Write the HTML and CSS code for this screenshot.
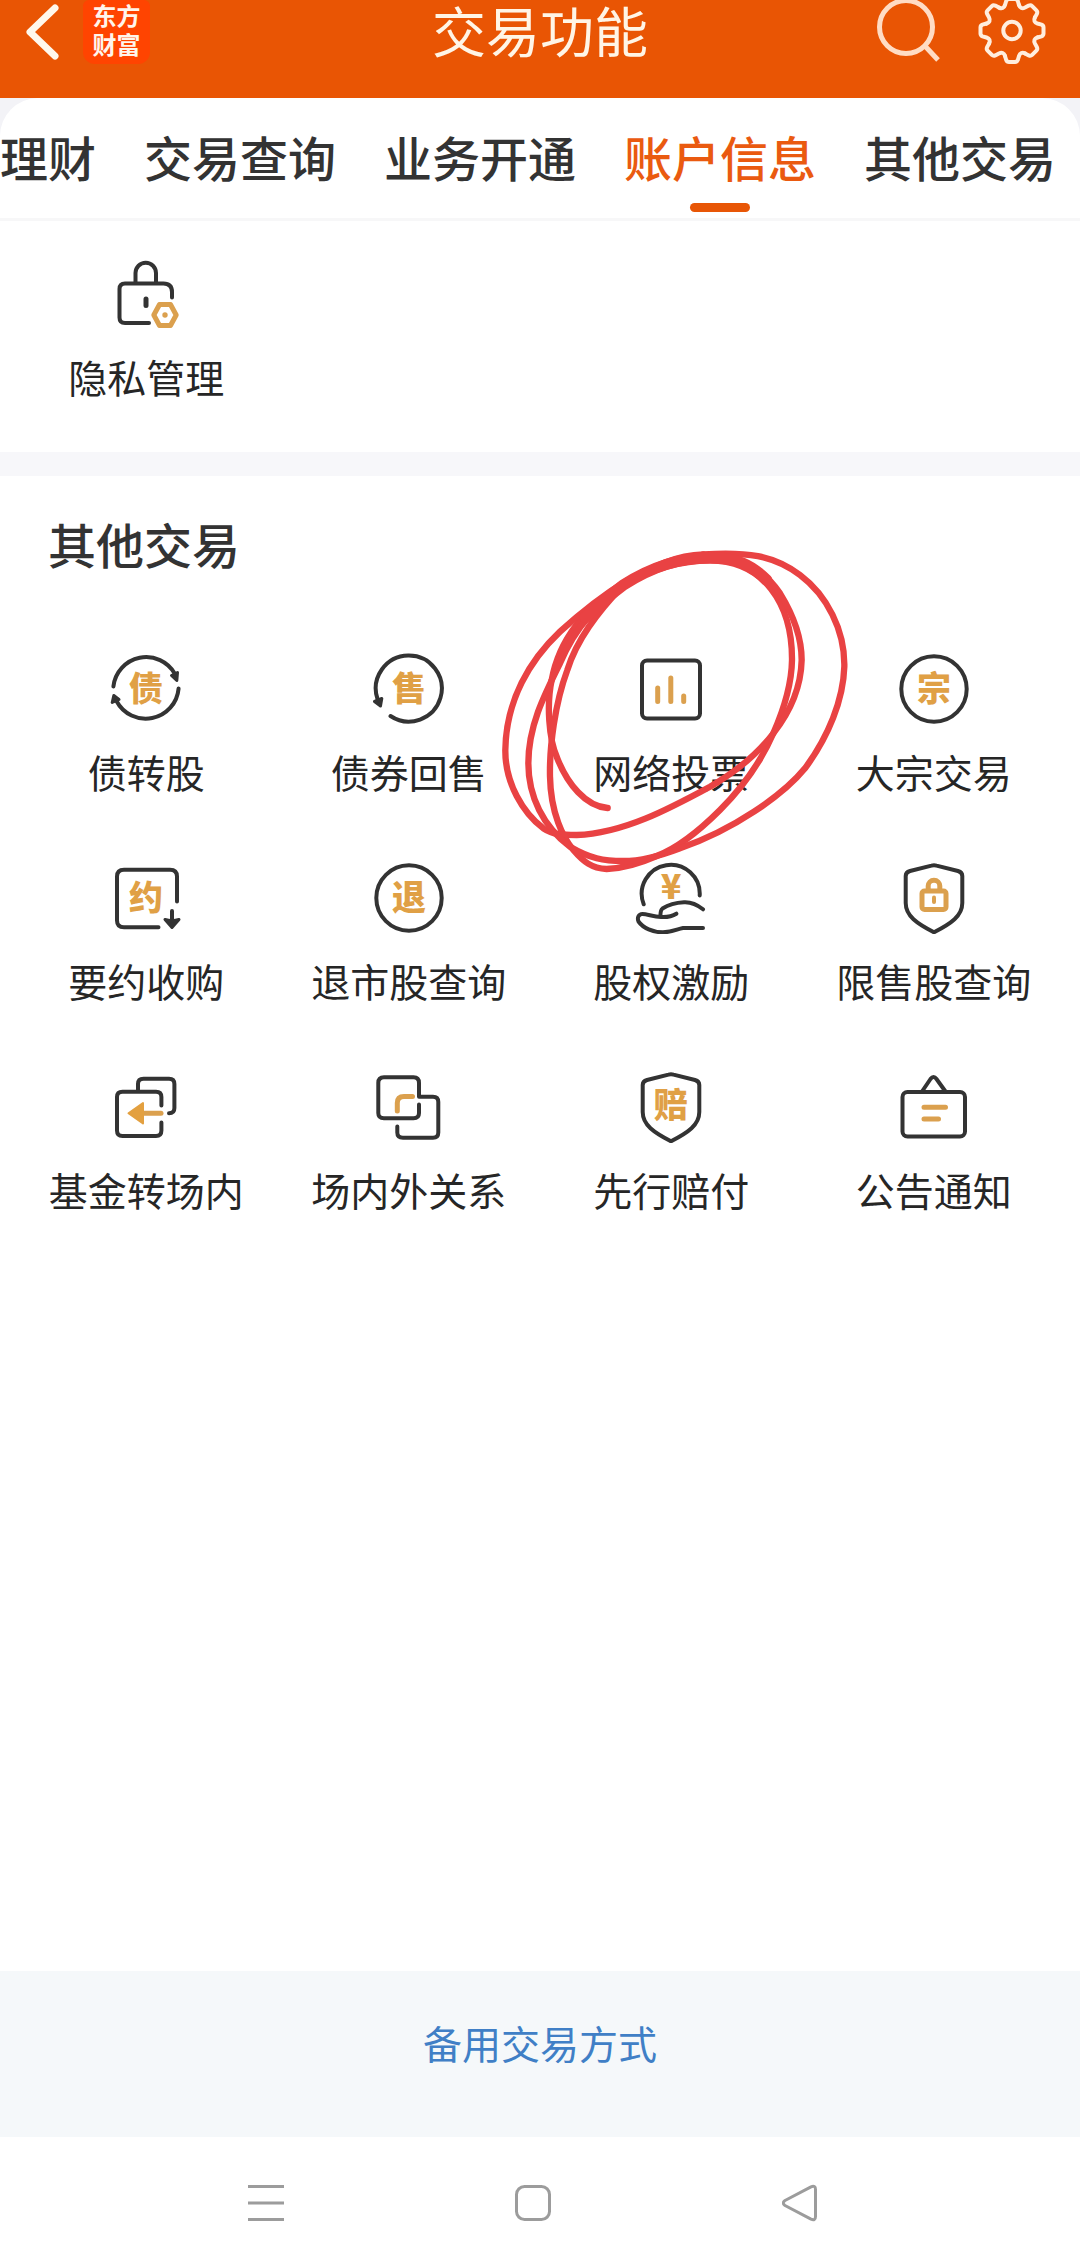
FILE: index.html
```html
<!DOCTYPE html>
<html lang="zh-CN">
<head>
<meta charset="utf-8">
<meta name="viewport" content="width=device-width, initial-scale=1">
<title>交易功能</title>
<link rel="stylesheet" href="styles.css">
</head>
<body>
<header class="topbar">
  <div class="topbar-left">
    <button class="icon-button" type="button" aria-label="返回">
      <svg class="back-icon" viewBox="0 0 34 62"><path d="M29 7L4 31L29 55"/></svg>
    </button>
    <div class="brand"><span>东方</span><span>财富</span></div>
  </div>
  <h1 class="title">交易功能</h1>
  <div class="topbar-right">
    <button class="icon-button" type="button" aria-label="搜索">
      <svg class="search-icon" viewBox="0 0 64 64"><circle cx="29" cy="27" r="26.500"/><path d="M48 46L61 60"/></svg>
    </button>
    <button class="icon-button" type="button" aria-label="设置">
      <svg class="gear-icon" viewBox="0 0 68 64">
        <defs><path id="tooth" d="M-13.1-22.9Q-8.6-20.8-7-25.5L-5.8-29.5Q-5-31.5-3-31.5H3Q5-31.5 5.8-29.5L7-25.5"/></defs>
        <g transform="translate(34 30.5)">
          <use href="#tooth"/><use href="#tooth" transform="rotate(45)"/><use href="#tooth" transform="rotate(90)"/><use href="#tooth" transform="rotate(135)"/>
          <use href="#tooth" transform="rotate(180)"/><use href="#tooth" transform="rotate(225)"/><use href="#tooth" transform="rotate(270)"/><use href="#tooth" transform="rotate(315)"/>
          <circle r="8.7"/>
        </g>
      </svg>
    </button>
  </div>
</header>

<div class="tabs-wrap">
  <nav class="tabs">
    <a class="tab" href="#licai">理财</a>
    <a class="tab" href="#query">交易查询</a>
    <a class="tab" href="#open">业务开通</a>
    <a class="tab tab-active" href="#account" aria-current="page">账户信息</a>
    <a class="tab" href="#other">其他交易</a>
  </nav>
</div>

<main class="content">
  <section class="section account" id="account">
    <div class="grid">
      <a class="item" href="#privacy">
        <svg class="icon" viewBox="0 0 72 72">
          <path d="M25.500 25V15a10.250 10.250 0 0 1 20.500 0V25M62 39.500V34q0-8.500-8.500-8.500H15q-5.500 0-5.500 5.500V59.500q0 5.500 5.500 5.500H39"/>
          <path class="thick" d="M36 41V47.500"/>
          <path class="gold" d="M49.500 46.500H60.500L66.200 57L60.500 67.500H49.500L43.800 57Z"/><circle class="gold-fill" cx="55" cy="57" r="2.700"/>
        </svg>
        <span class="label">隐私管理</span>
      </a>
    </div>
  </section>

  <section class="section other" id="other">
    <h2 class="heading">其他交易</h2>
    <div class="grid">
      <a class="item" href="#i1">
        <svg class="icon" viewBox="0 0 72 72">
          <path d="M3.400 33.500A33 33 0 0 1 65 21M68.600 35.500A33 33 0 0 1 6.500 48"/>
          <path class="head" d="M61.500 22.500L67.500 19.500L66.800 27.500ZM2.200 49.500L3.800 42.500L9 46.500Z"/>
          <text x="36" y="48">债</text>
        </svg>
        <span class="label">债转股</span>
      </a>
      <a class="item" href="#i2">
        <svg class="icon" viewBox="0 0 72 72">
          <path d="M17.500 63A33 33 0 1 0 4.500 46"/>
          <path class="head" d="M1.500 48.500L8.800 45.500L7.500 53Z"/>
          <text x="36" y="48">售</text>
        </svg>
        <span class="label">债券回售</span>
      </a>
      <a class="item marked" href="#i3">
        <svg class="icon" viewBox="0 0 72 72">
          <rect x="7" y="7.500" width="58" height="58" rx="5"/>
          <path class="gold" d="M22.700 35V48.500M35.800 25V48.500M48.700 43V48.500"/>
        </svg>
        <span class="label">网络投票</span>
        <svg class="scribble" viewBox="0 0 1200 1080" aria-hidden="true">
          <path d="M383 834C318 830 262 762 232 685C205 625 200 520 215 450C235 340 300 240 440 155C520 108 590 75 670 73"/>
          <path d="M430 165C520 115 600 92 690 92C850 92 937 220 936 390C935 460 915 530 880 610C845 690 790 770 720 840C660 900 590 955 530 978C480 1000 430 1015 380 1017C335 1015 310 995 280 960C250 925 212 850 210 740C208 650 225 520 262 420C290 330 350 250 430 165"/>
          <path d="M430 165C520 100 600 82 680 82C800 80 860 130 900 190C940 255 965 320 965 390C963 470 935 540 880 610C830 675 760 730 690 770C570 835 430 910 290 915C250 915 220 915 190 895C130 850 75 760 76 660C78 510 150 390 240 305C300 250 370 195 440 152"/>
          <path d="M670 73C800 65 880 75 960 135C1040 195 1095 300 1093 410C1090 510 1045 620 975 715C910 795 760 900 600 955C540 978 480 993 430 993C370 993 330 985 270 950C190 890 145 800 145 700C145 590 190 500 240 400C290 280 360 220 430 165"/>
          <path class="overlap" d="M315 262C355 225 390 195 430 165C520 108 600 83 690 83C770 83 815 105 860 150"/>
        </svg>
      </a>
      <a class="item" href="#i4">
        <svg class="icon" viewBox="0 0 72 72"><circle cx="36" cy="36" r="32.700"/><text x="36" y="48">宗</text></svg>
        <span class="label">大宗交易</span>
      </a>
      <a class="item" href="#i5">
        <svg class="icon" viewBox="0 0 72 72">
          <path d="M67 39.500V14.500Q67 7.700 60 7.700H14Q7 7.700 7 14.500V58.500Q7 65.300 14 65.300H48.500M62 49V60"/>
          <path class="head" d="M55 57.500Q62 60 69 57.500L62 65.500Z"/>
          <text x="36" y="48">约</text>
        </svg>
        <span class="label">要约收购</span>
      </a>
      <a class="item" href="#i6">
        <svg class="icon" viewBox="0 0 72 72"><circle cx="36" cy="36" r="32.700"/><text x="36" y="48">退</text></svg>
        <span class="label">退市股查询</span>
      </a>
      <a class="item" href="#i7">
        <svg class="icon" viewBox="0 0 72 72">
          <path d="M8.700 42.300A29 29 0 1 1 64.700 33.500M68 47.300C60 41 54 40 49 40.300C41 40.700 33 43 27.500 46.500C25.500 48 25.500 50 25.400 53.500M41.400 51.700C37 54.500 32 55.300 26 55C18 54.500 12 52 7.500 52C3.500 52 2 56 3.500 59.500C8 66 18 70.400 28 70.300C38 70.200 42 67 48 66H68"/>
          <text x="36" y="37">¥</text>
        </svg>
        <span class="label">股权激励</span>
      </a>
      <a class="item" href="#i8">
        <svg class="icon" viewBox="0 0 72 72">
          <path d="M33.500 3.600Q36 2.900 38.500 3.600L60 9Q64.300 10.200 64.300 14V41C64.300 54 53 61.500 36 70.300C19 61.500 7.700 54 7.700 41V14Q7.700 10.200 12 9Z"/>
          <path class="gold" d="M30.200 28V24a5.800 5.800 0 0 1 11.600 0V28"/><rect class="gold" x="24" y="29" width="24" height="18.500" rx="2.500"/>
          <path class="gold-thin" d="M36 35.500V40"/>
        </svg>
        <span class="label">限售股查询</span>
      </a>
      <a class="item" href="#i9">
        <svg class="icon" viewBox="0 0 72 72">
          <path d="M51.400 34.500V26Q51.400 20.700 46 20.700H12.500Q7 20.700 7 26V59.500Q7 65 12.500 65H46Q51.400 65 51.400 59.500V51.500M28 20.700V13Q28 7.700 33.500 7.700H59Q64.400 7.700 64.400 13V37Q64.400 42.300 59 42.300"/>
          <path class="gold" d="M32 42.300H51"/><path class="gold-head" d="M18.500 42.300L33 32V52.500Z"/>
        </svg>
        <span class="label">基金转场内</span>
      </a>
      <a class="item" href="#i10">
        <svg class="icon" viewBox="0 0 72 72">
          <path d="M46 33.500V42Q46 47.300 40.500 47.300H11Q5.300 47.300 5.300 42V12Q5.300 6.300 11 6.300H40.500Q46 6.300 46 12V25.700H60Q65.300 25.700 65.300 31V61.500Q65.300 66.700 60 66.700H30Q24.300 66.700 24.300 61.500V55.500"/>
          <path class="gold" d="M39.500 25.500H31Q24.300 25.500 24.300 32V40"/>
        </svg>
        <span class="label">场内外关系</span>
      </a>
      <a class="item" href="#i11">
        <svg class="icon" viewBox="0 0 72 72">
          <path d="M33.500 3.600Q36 2.900 38.500 3.600L60 9Q64.300 10.200 64.300 14V41C64.300 54 53 61.500 36 70.300C19 61.500 7.700 54 7.700 41V14Q7.700 10.200 12 9Z"/>
          <text x="36" y="46">赔</text>
        </svg>
        <span class="label">先行赔付</span>
      </a>
      <a class="item" href="#i12">
        <svg class="icon" viewBox="0 0 72 72">
          <rect x="4.500" y="21" width="62.500" height="44.500" rx="5"/><path d="M24 20.500L32.500 8Q35.500 4 38.500 8L47.500 20.500"/>
          <path class="gold" d="M26 36.300H47.500M26 48H40.500"/>
        </svg>
        <span class="label">公告通知</span>
      </a>
    </div>
  </section>
</main>

<footer class="footer"><a class="backup" href="#backup">备用交易方式</a></footer>

<div class="sysnav">
  <button class="icon-button" type="button" aria-label="最近任务"><svg class="sys-icon" viewBox="0 0 36 38"><path d="M0 2.500H36M0 19H36M0 35.500H36"/></svg></button>
  <button class="icon-button" type="button" aria-label="主页"><svg class="sys-icon" viewBox="0 0 36 38"><rect x="1.500" y="2.500" width="33" height="33" rx="8"/></svg></button>
  <button class="icon-button" type="button" aria-label="返回上级"><svg class="sys-icon" viewBox="0 0 36 38"><path d="M3 16.500L29 2.800Q33.500 1 33.500 5.500V32.500Q33.500 37 29 35.200L3 21.500Q-.500 19 3 16.500Z"/></svg></button>
</div>
</body>
</html>
```
FILE: styles.css
```css
* { box-sizing: border-box; }

body {
  margin: 0;
  min-height: 100vh;
  display: flex;
  flex-direction: column;
  background: #fff;
  color: #333;
  font-family: "Noto Sans CJK SC", "Noto Sans", sans-serif;
}

a { color: inherit; text-decoration: none; }
h1, h2 { margin: 0; }
svg { display: block; fill: none; stroke-linecap: round; stroke-linejoin: round; }

.icon-button {
  padding: 0;
  border: 0;
  background: none;
  cursor: pointer;
}

/* Top bar */
.topbar {
  display: grid;
  grid-template-columns: 1fr auto 1fr;
  align-items: start;
  padding: 0 26px 34px;
  background: #e95504;
}

.topbar-left, .topbar-right { display: flex; }
.topbar-left { gap: 23px; }
.topbar-right { justify-content: flex-end; gap: 37px; padding-right: 8px; }

.title {
  color: #fff5e6;
  font-size: 54px;
  line-height: 60px;
  font-weight: 400;
}

.brand {
  display: flex;
  flex-direction: column;
  align-items: center;
  width: 67px;
  height: 64px;
  border-radius: 6px 6px 12px 12px;
  background: #ff4401;
  color: #fff5ec;
  font-size: 24px;
  line-height: 29px;
  font-weight: 700;
}

.back-icon { width: 34px; height: 62px; stroke: #fff8ec; stroke-width: 7; }
.search-icon { width: 64px; height: 64px; stroke: #ffdcc4; stroke-width: 5; stroke-linecap: butt; }
.gear-icon { width: 68px; height: 64px; stroke: #ffeede; stroke-width: 4; }

/* Category tabs */
.tabs-wrap { background: #f3f3f7; }

.tabs {
  display: flex;
  gap: 48px;
  padding: 23px 0 6px;
  overflow: hidden;
  border-bottom: 3px solid #f7f7f8;
  border-radius: 38px 38px 0 0;
  background: #fff;
}

.tab {
  flex: none;
  font-size: 48px;
  line-height: 70px;
  font-weight: 500;
}

.tab::after {
  content: "";
  display: block;
  width: 60px;
  height: 9px;
  margin: 12px auto 0;
  border-radius: 5px;
}

.tab-active { color: #ea5a10; }
.tab-active::after { background: #e85606; }

/* Feature sections */
.content { flex: 1; }
.account { padding: 37px 0 49px; border-bottom: 24px solid #f7f7fa; }
.other { padding: 37px 0 48px; }

.heading {
  margin: 0 48px 80px;
  font-size: 48px;
  line-height: 60px;
  font-weight: 500;
}

.grid {
  display: grid;
  grid-template-columns: repeat(4, 1fr);
  row-gap: 64px;
  padding: 0 15px;
}

.item {
  display: flex;
  flex-direction: column;
  align-items: center;
  gap: 19px;
}

.label {
  color: #262626;
  font-size: 39px;
  line-height: 54px;
  white-space: nowrap;
}

.icon { width: 72px; height: 72px; stroke: #333; stroke-width: 4; }
.icon text {
  fill: #e0a045;
  stroke: none;
  font-size: 34px;
  font-weight: 900;
  text-anchor: middle;
}
.thick { stroke-width: 5; }
.head { fill: #333; stroke-width: 3; }
.gold { stroke: #dba04e; stroke-width: 5; }
.gold-thin { stroke: #dba04e; stroke-width: 4; }
.gold-fill { fill: #dba04e; stroke: none; }
.gold-head { fill: #e3a040; stroke: #e3a040; stroke-width: 2; }

/* Hand-drawn ring over the marked item */
.marked { position: relative; }
.scribble {
  position: absolute;
  top: -123px;
  left: -60px;
  width: 400px;
  height: 360px;
  stroke: #e94243;
  stroke-width: 19;
  pointer-events: none;
}
.overlap { stroke-width: 34; }

/* Bottom link */
.footer {
  padding: 41px 0 65px;
  background: #f5f8fa;
  text-align: center;
}

.backup {
  display: block;
  color: #407fc6;
  font-size: 39px;
  line-height: 60px;
}

/* System navigation */
.sysnav {
  display: flex;
  justify-content: space-between;
  padding: 47px 262px 46px 248px;
}

.sys-icon { width: 36px; height: 38px; stroke: #9c9c9c; stroke-width: 3; stroke-linecap: butt; }
```
